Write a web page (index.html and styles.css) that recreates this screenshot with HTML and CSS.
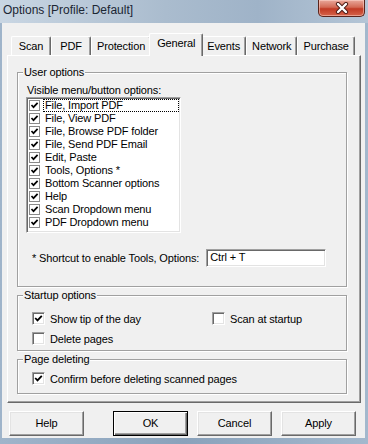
FILE: index.html
```html
<!DOCTYPE html>
<html lang="en">
  <head>
    <meta charset="UTF-8" />
    <title>Options [Profile: Default]</title>
    <link rel="stylesheet" href="styles.css">
  </head>
  <body>
    <div class="window">
      <div class="titlebar">
        <span class="title">Options [Profile: Default]</span>
        <div class="close-btn">
          <svg width="14" height="12" viewBox="0 0 14 12">
            <path d="M3 2 L11 10 M11 2 L3 10" stroke="#4a1a14" stroke-width="4.2" stroke-linecap="round" />
            <path d="M3 2 L11 10 M11 2 L3 10" stroke="#ffffff" stroke-width="2.4" stroke-linecap="round" />
          </svg>
        </div>
      </div>

      <div class="client">
        <div class="tabs">
          <div class="tab">Scan</div>
          <div class="tab">PDF</div>
          <div class="tab">Protection</div>
          <div class="tab active">General</div>
          <div class="tab">Events</div>
          <div class="tab">Network</div>
          <div class="tab">Purchase</div>
        </div>

        <div class="tab-panel">
          <fieldset class="group group-user">
            <legend>User options</legend>
            <div class="group-body user-body">
              <div class="field-label">Visible menu/button options:</div>
              <ul class="check-list">
                <li class="focused"><span class="mini-check"></span><span class="item-text">File, Import PDF</span></li>
                <li><span class="mini-check"></span><span class="item-text">File, View PDF</span></li>
                <li><span class="mini-check"></span><span class="item-text">File, Browse PDF folder</span></li>
                <li><span class="mini-check"></span><span class="item-text">File, Send PDF Email</span></li>
                <li><span class="mini-check"></span><span class="item-text">Edit, Paste</span></li>
                <li><span class="mini-check"></span><span class="item-text">Tools, Options *</span></li>
                <li><span class="mini-check"></span><span class="item-text">Bottom Scanner options</span></li>
                <li><span class="mini-check"></span><span class="item-text">Help</span></li>
                <li><span class="mini-check"></span><span class="item-text">Scan Dropdown menu</span></li>
                <li><span class="mini-check"></span><span class="item-text">PDF Dropdown menu</span></li>
              </ul>
              <div class="shortcut-row">
                <span>* Shortcut to enable Tools, Options:</span>
                <div class="text-input">Ctrl + T</div>
              </div>
            </div>
          </fieldset>

          <fieldset class="group group-startup">
            <legend>Startup options</legend>
            <div class="group-body check-grid">
              <label class="check-label"><span class="check checked"></span>Show tip of the day</label>
              <label class="check-label"><span class="check"></span>Scan at startup</label>
              <label class="check-label"><span class="check"></span>Delete pages</label>
            </div>
          </fieldset>

          <fieldset class="group group-delete">
            <legend>Page deleting</legend>
            <div class="group-body delete-body">
              <label class="check-label"><span class="check checked"></span>Confirm before deleting scanned pages</label>
            </div>
          </fieldset>
        </div>

        <div class="buttons">
          <div class="btn btn-help">Help</div>
          <div class="btn btn-default">OK</div>
          <div class="btn">Cancel</div>
          <div class="btn">Apply</div>
        </div>
      </div>
    </div>
  </body>
</html>
```

FILE: styles.css
```css
* {
  box-sizing: border-box;
}
body {
  margin: 0;
  width: 368px;
  height: 444px;
  overflow: hidden;
  font-family: "Liberation Sans", Arial, sans-serif;
  font-size: 11px;
  letter-spacing: -0.14px;
  color: #000;
}
.window {
  height: 444px;
  padding: 0 3px 6px 2px;
  background: linear-gradient(to right, #9fb4ca, #8aa2bb 50%, #a3b8cd);
}
.titlebar {
  height: 23px;
  display: flex;
  align-items: flex-start;
  background: linear-gradient(to right, #c9d6e3, #aabcce 45%, #9fb3c8 70%, #b4c5d6);
  margin: 0 -3px 0 -2px;
  padding: 0 3px 0 2px;
}
.title {
  margin: 3px 0 0 1px;
  font-size: 12px;
  line-height: 15px;
  letter-spacing: 0;
  color: #1b2633;
}
.close-btn {
  margin-left: auto;
  width: 47px;
  height: 17px;
  display: flex;
  align-items: center;
  justify-content: center;
  border: 1px solid #5b241c;
  border-top: none;
  border-radius: 0 0 5px 5px;
  background: linear-gradient(#e9a89b, #d36a55 45%, #c13a24 55%, #d5634a);
  box-shadow: inset 0 0 0 1px rgba(255, 220, 210, 0.5);
}
.client {
  height: 415px;
  padding: 10px 4px 0 5px;
  background-color: #f0f0f0;
}

/* tabs */
.tabs {
  height: 22px;
  display: flex;
  align-items: flex-end;
  padding-left: 4px;
}
.tab {
  height: 19px;
  min-width: 40px;
  padding: 0 5px;
  line-height: 18px;
  text-align: center;
  border: 1px solid;
  border-color: #fff #696969 transparent #fff;
  border-bottom: none;
  border-radius: 2px 2px 0 0;
  box-shadow: inset -1px 0 0 #a0a0a0;
}
.tab.active {
  position: relative;
  z-index: 1;
  height: 23px;
  margin: 0 -2px -1px;
  padding: 0 7px 3px;
  line-height: 18px;
  background-color: #f0f0f0;
}
.tab-panel {
  height: 348px;
  padding: 10px 13px 0 9px;
  border: 1px solid;
  border-color: #fff #696969 #696969 #fff;
  box-shadow: inset -1px -1px 0 #a0a0a0;
}

/* group boxes */
.group {
  margin: 0;
  padding: 0;
  min-width: 0;
  border: 1px solid #a0a0a0;
  box-shadow: 1px 1px 0 #fff, inset 1px 1px 0 #fff;
}
.group legend {
  margin-left: 5px;
  padding: 0 1px;
  line-height: 13px;
  background-color: #f0f0f0;
}
.group-user {
  height: 221px;
}
.group-startup {
  height: 62px;
  margin-top: 2px;
}
.group-delete {
  height: 41px;
  margin-top: 2px;
}
.user-body {
  padding: 5px 0 0 9px;
}
.field-label {
  line-height: 13px;
}
.check-list {
  list-style: none;
  margin: 0 0 0 -1px;
  width: 155px;
  height: 136px;
  background-color: #fff;
  border: 1px solid;
  border-color: #a0a0a0 #fff #fff #a0a0a0;
  box-shadow: inset 1px 1px 0 #696969, inset -1px -1px 0 #e3e3e3;
  padding: 1px 1px 1px 2px;
}
.check-list li {
  height: 13px;
  display: flex;
  align-items: center;
}
.mini-check {
  width: 11px;
  height: 11px;
  flex: none;
  margin-right: 3px;
  border: 1px solid #8a8a8a;
  background: #fff url("data:image/svg+xml;utf8,<svg xmlns='http://www.w3.org/2000/svg' width='9' height='9' viewBox='0 0 9 9'><path d='M1.5 4 L3.5 6.2 L7.6 1.8' fill='none' stroke='black' stroke-width='1.7'/></svg>") center no-repeat;
}
.item-text {
  flex: 1;
  height: 13px;
  line-height: 11px;
  padding-left: 1px;
  border: 1px dotted transparent;
  white-space: nowrap;
}
.focused .item-text {
  border-color: #000;
}
.shortcut-row {
  display: flex;
  align-items: center;
  gap: 7px;
  height: 18px;
  margin-top: 16px;
  padding-left: 5px;
}
.text-input {
  width: 120px;
  height: 18px;
  padding: 0 3px;
  line-height: 15px;
  background-color: #fff;
  border: 1px solid;
  border-color: #a0a0a0 #fff #fff #a0a0a0;
  box-shadow: inset 1px 1px 0 #696969, inset -1px -1px 0 #e3e3e3;
}

/* checkboxes */
.check-grid {
  display: grid;
  grid-template-columns: 180px 1fr;
  row-gap: 7px;
  padding: 10px 0 0 14px;
}
.delete-body {
  padding: 6px 0 0 14px;
}
.check-label {
  display: flex;
  align-items: center;
  height: 13px;
  gap: 5px;
  white-space: nowrap;
}
.check {
  width: 13px;
  height: 13px;
  flex: none;
  background-color: #fff;
  border: 1px solid;
  border-color: #a0a0a0 #fff #fff #a0a0a0;
  box-shadow: inset 1px 1px 0 #696969, inset -1px -1px 0 #e3e3e3;
}
.check.checked {
  background: #fff url("data:image/svg+xml;utf8,<svg xmlns='http://www.w3.org/2000/svg' width='9' height='9' viewBox='0 0 9 9'><path d='M1.2 4 L3.5 6.4 L7.8 1.8' fill='none' stroke='black' stroke-width='1.8'/></svg>") center no-repeat;
}

/* buttons */
.buttons {
  display: flex;
  gap: 9px;
  margin-top: 8px;
  padding: 0 5px 0 2px;
}
.btn {
  width: 75px;
  height: 25px;
  line-height: 23px;
  text-align: center;
  border: 1px solid;
  border-color: #fff #696969 #696969 #fff;
  box-shadow: inset -1px -1px 0 #a0a0a0, inset 1px 1px 0 #e3e3e3;
}
.btn-help {
  margin-right: auto;
}
.btn-default {
  border-color: #000;
  box-shadow: inset 1px 1px 0 #fff, inset -1px -1px 0 #696969, inset -2px -2px 0 #a0a0a0;
}
```
